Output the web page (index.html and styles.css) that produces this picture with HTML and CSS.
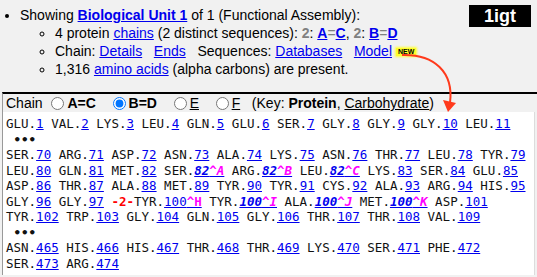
FILE: index.html
```html
<!DOCTYPE html>
<html lang="en">
<head>
    <meta charset="UTF-8">
    <title>1igt - Biological Unit</title>
    <link rel="stylesheet" href="styles.css">
</head>
<body>
    <div class="top">
        <ul class="info">
            <li>Showing <a href="#" class="unit">Biological Unit 1</a> of 1 (Functional Assembly):
                <ul class="sub">
                    <li>4 protein <a href="#">chains</a> (2 distinct sequences): <b class="count">2</b>: <a href="#" class="ch">A</a><span class="eq">=</span><a href="#" class="ch">C</a>, <b class="count">2</b>: <a href="#" class="ch">B</a><span class="eq">=</span><a href="#" class="ch">D</a></li>
                    <li>Chain: <a href="#">Details</a> &nbsp;&nbsp;<a href="#">Ends</a> &nbsp;&nbsp;Sequences: <a href="#">Databases</a> &nbsp;&nbsp;<a href="#">Model</a> <span class="new">NEW</span></li>
                    <li>1,316 <a href="#">amino acids</a> (alpha carbons) are present.</li>
                </ul>
            </li>
        </ul>
        <div class="pdb-id">1igt</div>
    </div>

    <svg class="arrow" width="537" height="277" viewBox="0 0 537 277">
        <path d="M402 55 C434 54 454 72 450 103" fill="none" stroke="#ff3a1c" stroke-width="2"/>
        <polygon points="443,100 456,103 448,112" fill="#ff3a1c"/>
    </svg>

    <div class="seq-panel">
        <div class="chain-bar">
            Chain <label><input type="radio" name="chain"><b>A=C</b></label> &nbsp;&nbsp;<label><input type="radio" name="chain" checked><b>B=D</b></label> &nbsp;&nbsp;<label><input type="radio" name="chain"><u>E</u></label> &nbsp;&nbsp;<label><input type="radio" name="chain"><u>F</u></label> &nbsp;&nbsp;(Key: <b>Protein</b>, <u>Carbohydrate</u>)
        </div>
        <div class="seq">
            <div class="line">GLU.<a href="#">1</a> VAL.<a href="#">2</a> LYS.<a href="#">3</a> LEU.<a href="#">4</a> GLN.<a href="#">5</a> GLU.<a href="#">6</a> SER.<a href="#">7</a> GLY.<a href="#">8</a> GLY.<a href="#">9</a> GLY.<a href="#">10</a> LEU.<a href="#">11</a></div>
            <div class="line gap">&nbsp;<b>&bull;&bull;&bull;</b></div>
            <div class="line">SER.<a href="#">70</a> ARG.<a href="#">71</a> ASP.<a href="#">72</a> ASN.<a href="#">73</a> ALA.<a href="#">74</a> LYS.<a href="#">75</a> ASN.<a href="#">76</a> THR.<a href="#">77</a> LEU.<a href="#">78</a> TYR.<a href="#">79</a></div>
            <div class="line">LEU.<a href="#">80</a> GLN.<a href="#">81</a> MET.<a href="#">82</a> SER.<a href="#" class="ins"><span>82</span><span class="ic">^A</span></a> ARG.<a href="#" class="ins"><span>82</span><span class="ic">^B</span></a> LEU.<a href="#" class="ins"><span>82</span><span class="ic">^C</span></a> LYS.<a href="#">83</a> SER.<a href="#">84</a> GLU.<a href="#">85</a></div>
            <div class="line">ASP.<a href="#">86</a> THR.<a href="#">87</a> ALA.<a href="#">88</a> MET.<a href="#">89</a> TYR.<a href="#">90</a> TYR.<a href="#">91</a> CYS.<a href="#">92</a> ALA.<a href="#">93</a> ARG.<a href="#">94</a> HIS.<a href="#">95</a></div>
            <div class="line">GLY.<a href="#">96</a> GLY.<a href="#">97</a> <b class="missing">-2-</b>TYR.<a href="#">100<span class="ic">^H</span></a> TYR.<a href="#" class="ins"><span>100</span><span class="ic">^I</span></a> ALA.<a href="#" class="ins"><span>100</span><span class="ic">^J</span></a> MET.<a href="#" class="ins"><span>100</span><span class="ic">^K</span></a> ASP.<a href="#">101</a></div>
            <div class="line">TYR.<a href="#">102</a> TRP.<a href="#">103</a> GLY.<a href="#">104</a> GLN.<a href="#">105</a> GLY.<a href="#">106</a> THR.<a href="#">107</a> THR.<a href="#">108</a> VAL.<a href="#">109</a></div>
            <div class="line gap">&nbsp;<b>&bull;&bull;&bull;</b></div>
            <div class="line">ASN.<a href="#">465</a> HIS.<a href="#">466</a> HIS.<a href="#">467</a> THR.<a href="#">468</a> THR.<a href="#">469</a> LYS.<a href="#">470</a> SER.<a href="#">471</a> PHE.<a href="#">472</a></div>
            <div class="line">SER.<a href="#">473</a> ARG.<a href="#">474</a></div>
        </div>
    </div>
</body>
</html>
```

FILE: styles.css
```css
body {
    font-family: 'Liberation Sans', Arial, sans-serif;
    font-size: 14px;
    margin: 0;
    background-color: #f1f1f1;
    color: #000;
    overflow: hidden;
}

a {
    color: #0000ee;
}

.top {
    display: flex;
    justify-content: space-between;
    align-items: flex-start;
}

.info {
    margin: 6px 0 14px;
    padding-left: 20px;
    line-height: 18px;
}

.sub {
    margin: 0;
    padding-left: 35px;
    list-style-type: circle;
}

.unit {
    font-weight: bold;
}

.count {
    color: #808080;
}

.ch {
    font-weight: bold;
}

.eq {
    color: #808080;
}

.new {
    display: inline-block;
    vertical-align: 2px;
    font-size: 7px;
    font-weight: bold;
    line-height: 8px;
    padding: 0 2px;
    background: #ffff2a;
    box-shadow: 0 0 2px 1px #ffff40;
    color: #000;
}

.pdb-id {
    margin: 5px 6px 0 0;
    padding: 0 15px;
    background: #000;
    color: #fff;
    font-size: 18px;
    font-weight: bold;
    line-height: 22px;
}

.arrow {
    position: absolute;
    top: 0;
    left: 0;
    pointer-events: none;
}

.seq-panel {
    margin-left: 2px;
    border-top: 2px solid #000;
    border-left: 1px solid #999;
}

.chain-bar {
    padding-left: 3px;
    line-height: 18px;
    white-space: nowrap;
}

.chain-bar input {
    width: 13px;
    height: 13px;
    margin: 0 3px 0 5px;
    vertical-align: -2px;
}

.seq {
    margin-right: 2px;
    border-right: 1px solid #dcdcdc;
    background: #fff;
    padding: 4px 0 4px 3px;
    font-family: 'DejaVu Sans Mono', monospace;
    font-size: 12.5px;
    line-height: 15.5px;
    color: #111;
}

.line {
    white-space: nowrap;
}

.ins {
    font-weight: bold;
    font-style: italic;
}

.ic {
    color: #ff00ff;
    font-weight: bold;
}

.missing {
    color: #ff0000;
}
```
